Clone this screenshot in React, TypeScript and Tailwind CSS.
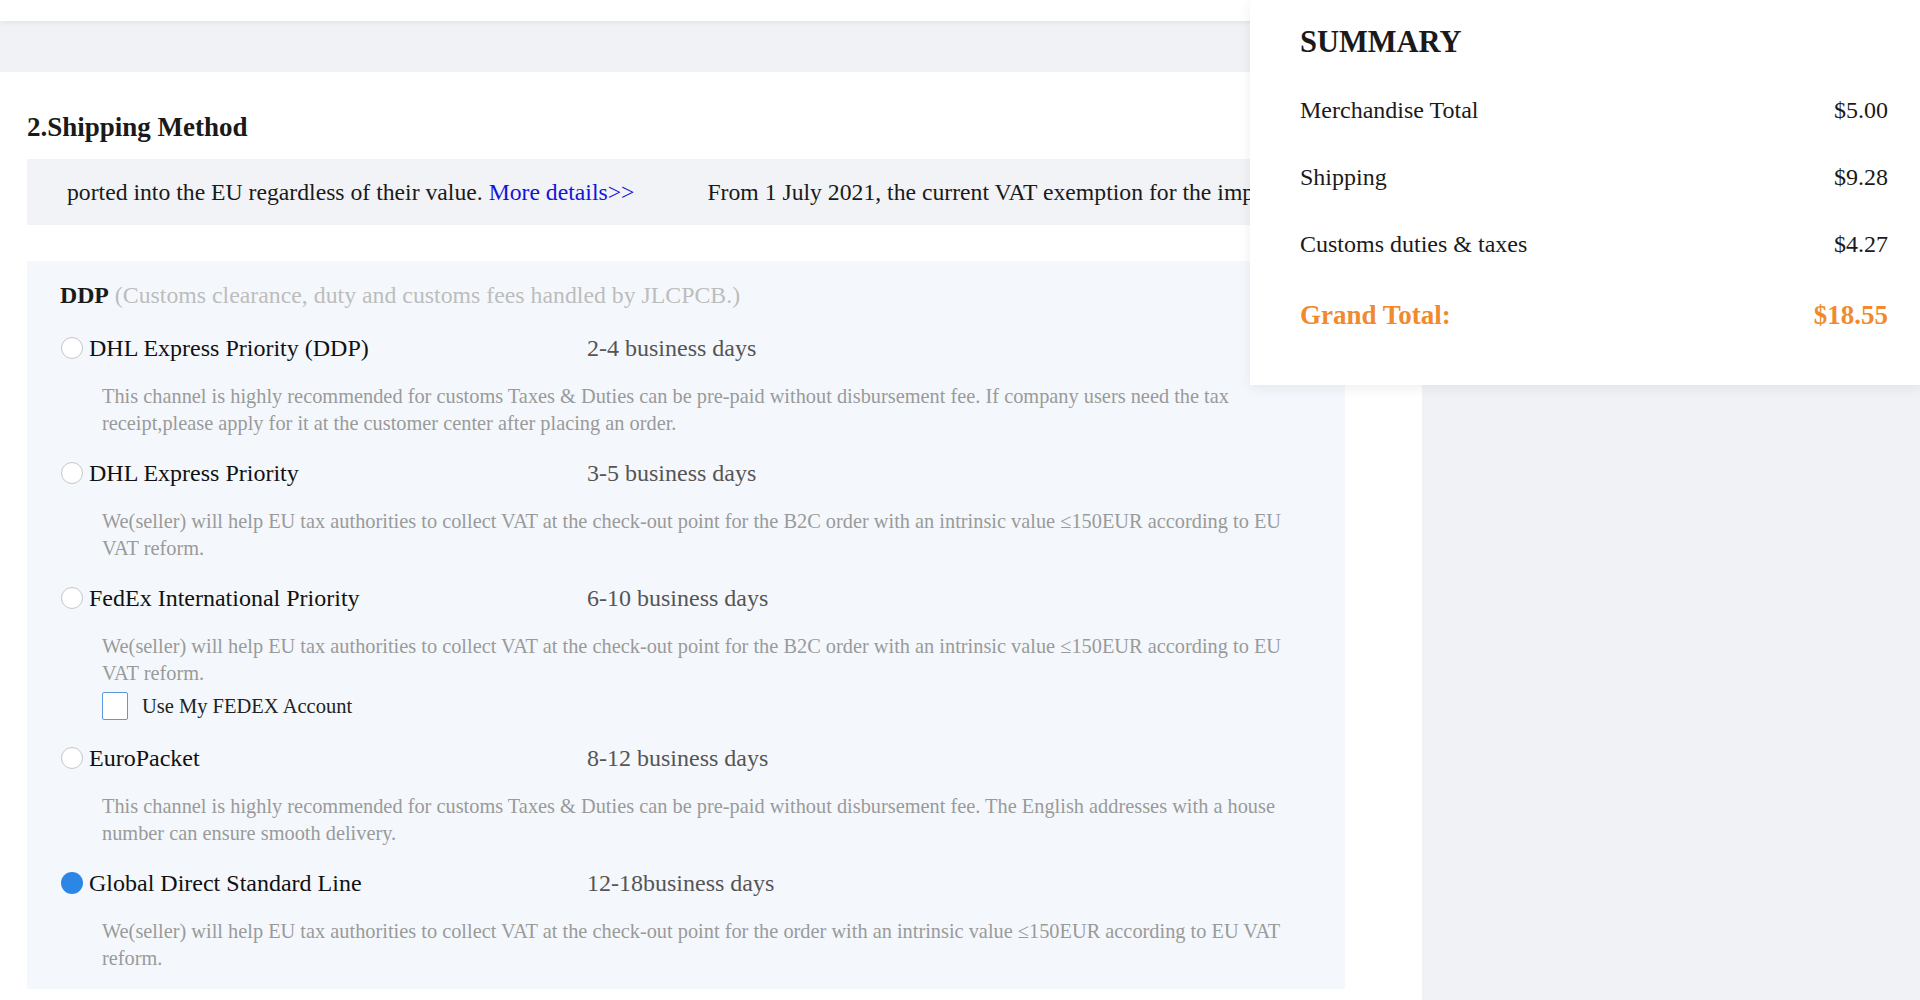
import React from 'react';

const taxNote =
  'We(seller) will help EU tax authorities to collect VAT at the check-out point for the B2C order with an intrinsic value ≤150EUR according to EU VAT reform.';

const options = [
  {
    name: 'DHL Express Priority (DDP)',
    days: '2-4 business days',
    desc: 'This channel is highly recommended for customs Taxes & Duties can be pre-paid without disbursement fee. If company users need the tax receipt,please apply for it at the customer center after placing an order.',
  },
  { name: 'DHL Express Priority', days: '3-5 business days', desc: taxNote },
  { name: 'FedEx International Priority', days: '6-10 business days', desc: taxNote, account: true },
  {
    name: 'EuroPacket',
    days: '8-12 business days',
    desc: 'This channel is highly recommended for customs Taxes & Duties can be pre-paid without disbursement fee. The English addresses with a house number can ensure smooth delivery.',
  },
  {
    name: 'Global Direct Standard Line',
    days: '12-18business days',
    desc: 'We(seller) will help EU tax authorities to collect VAT at the check-out point for the order with an intrinsic value ≤150EUR according to EU VAT reform.',
    selected: true,
  },
];

const summaryRows = [
  { label: 'Merchandise Total', value: '$5.00' },
  { label: 'Shipping', value: '$9.28' },
  { label: 'Customs duties & taxes', value: '$4.27' },
];

export default function App() {
  return (
    <div className="relative min-h-[1000px] bg-white font-['Liberation_Serif','Times_New_Roman',serif] text-[#1a1a1a]">
      {/* top bar */}
      <div className="relative z-10 h-[21px] bg-white shadow-[0_2px_5px_rgba(0,0,0,0.06)]" />

      <div className="flex min-h-[979px]">
        <div className="w-[1422px] shrink-0">
          <div className="h-[51px] bg-[#f1f2f5]" />

          <div className="pl-[27px] pr-[77px]">
            <h2 className="mt-[39px] text-[27px] font-bold leading-[32px]">2.Shipping Method</h2>

            {/* notice marquee, runs on under the summary panel */}
            <div className="mt-[16px] h-[66px] w-[1223px] overflow-hidden whitespace-nowrap bg-[#f2f3f6] pl-[40px] text-[23.7px] leading-[66px] text-[#1a1a1a]">
              <span>ported into the EU regardless of their value. </span>
              <span className="text-[#1414d8]">More details&gt;&gt;</span>
              <span className="ml-[73px]">
                From 1 July 2021, the current VAT exemption for the importation of goods not exceeding EUR 22 will be removed.
              </span>
            </div>

            {/* DDP options */}
            <div className="mt-[36px] bg-[#f4f8fc] pb-[17px] pl-[33px] pt-[18px]">
              <div className="text-[23.8px] leading-[32px]">
                <span className="font-bold">DDP</span>
                <span className="text-[#bdbdbd]"> (Customs clearance, duty and customs fees handled by JLCPCB.)</span>
              </div>

              <div className="mt-[21px] flex flex-col gap-[20px]">
                {options.map((o) => (
                  <div key={o.name}>
                    <div className="flex h-[32px] items-center">
                      <span
                        className={
                          o.selected
                            ? 'ml-px mr-[6px] h-[22px] w-[22px] shrink-0 rounded-full bg-[#2b86e6]'
                            : 'ml-px mr-[6px] h-[22px] w-[22px] shrink-0 rounded-full border border-[#c6c6c6] bg-white'
                        }
                      />
                      <span className="w-[498px] text-[24px] leading-[32px] text-[#111]">{o.name}</span>
                      <span className="text-[24px] leading-[32px] text-[#555]">{o.days}</span>
                    </div>
                    <p className="ml-[42px] mt-[19px] w-[1200px] text-[20.35px] leading-[27px] text-[#9a9a9a]">{o.desc}</p>
                    {o.account && (
                      <div className="ml-[42px] mt-[5px] flex h-[28px] items-center">
                        <span className="h-[28px] w-[26px] rounded-[2px] border-[1.5px] border-[#5a9ad8] bg-white" />
                        <span className="ml-[14px] text-[20.5px] leading-[28px] text-[#222]">Use My FEDEX Account</span>
                      </div>
                    )}
                    {o.account && <div className="h-[2px]" />}
                  </div>
                ))}
              </div>
            </div>
          </div>
        </div>

        <div className="flex-1 bg-[#f1f2f5]" />
      </div>

      {/* summary panel */}
      <aside className="absolute right-0 top-0 z-20 h-[385px] w-[670px] bg-white pl-[50px] pr-[32px] pt-[24px] shadow-[0_3px_12px_rgba(0,0,0,0.07)]">
        <h3 className="text-[30.5px] font-bold leading-[36px] text-[#1a1a1a]">SUMMARY</h3>
        <div className="mt-[34px] flex flex-col gap-[35px]">
          {summaryRows.map((r) => (
            <div key={r.label} className="flex h-[32px] items-center justify-between text-[24px] leading-[32px] text-[#1a1a1a]">
              <span>{r.label}</span>
              <span>{r.value}</span>
            </div>
          ))}
        </div>
        <div className="mt-[37px] flex h-[36px] items-center justify-between text-[27px] font-bold leading-[36px] text-[#f18a2e]">
          <span>Grand Total:</span>
          <span>$18.55</span>
        </div>
      </aside>
    </div>
  );
}
